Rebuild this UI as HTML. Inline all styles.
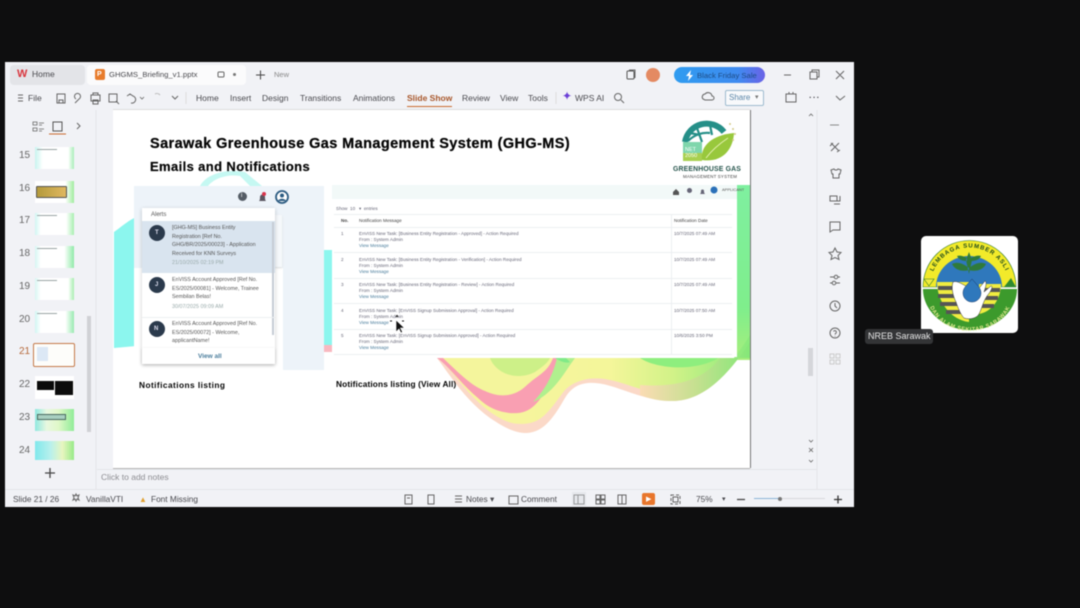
<!DOCTYPE html>
<html><head><meta charset="utf-8"><style>
html,body{margin:0;padding:0;background:#0e0e0f}
#r{position:relative;width:1080px;height:608px;overflow:hidden;background:#0e0e0f;font-family:"Liberation Sans",sans-serif;filter:blur(.45px)}
.a{position:absolute}
.t{position:absolute;white-space:nowrap;color:#4a4a4f;font-size:8.5px;line-height:11px}
.s{position:absolute;left:0;top:0}
.n{color:#666;font-size:10px;left:19px}
.th{position:absolute;left:35px;width:39px;height:22px;background:#fff}
.tl{position:absolute;left:37px;width:20px;height:1px;background:#9aa5a5}
.b{position:absolute;white-space:nowrap;font-weight:bold;color:#050505}
.m{position:absolute;white-space:nowrap;font-size:4.6px;line-height:6px;color:#667}
.l{color:#4a7d9c}
.hr{position:absolute;height:1px;background:#eceff1}
.al{position:absolute;white-space:nowrap;font-size:5.4px;line-height:8.6px;color:#555}
</style></head><body><div id="r">
<div class="a" style="left:5px;top:62px;width:849px;height:445px;background:#f1f2f6"></div>
<div class="a" style="left:10px;top:65px;width:75px;height:20px;background:#e3e4e8;border-radius:4px"></div>
<div class="a" style="left:87px;top:65px;width:159px;height:20px;background:#fbfbfc;border-radius:4px"></div>
<div class="t" style="left:17px;top:69px;color:#d9363e;font-weight:bold;font-size:11px">W</div>
<div class="t" style="left:32px;top:69px">Home</div>
<div class="a" style="left:95px;top:69px;width:10px;height:11px;background:#e87c2c;border-radius:2px"></div>
<div class="t" style="left:97px;top:69px;color:#fff;font-size:7px;font-weight:bold">P</div>
<div class="t" style="left:109px;top:69px;font-size:7.700px">GHGMS_Briefing_v1.pptx</div>
<div class="a" style="left:233px;top:73px;width:3px;height:3px;background:#777;border-radius:50%"></div>
<div class="t" style="left:274px;top:69px;font-size:7.500px;color:#888">New</div>
<svg class="s" width="1080" height="608" fill="none" stroke="#666" stroke-width="1">
<rect x="218" y="72" width="6" height="5" rx="1"/><path d="M256 75h9M260.500 70.500v9" stroke="#444"/>
<rect x="627" y="71" width="7" height="8" rx="1" stroke="#555"/><path d="M629 70h6v8"/>
<path d="M784 75h7M810 72h7v7h-7zM812 72v-2h7v7h-2M836 71l8 8M844 71l-8 8"/>
<path d="M18 95h5M18 98h5M18 101h5M57 94h8v9h-8zM59 103v-3h4v3M76 99a3 3 0 1 1 3 0l-4 4M91 95h9v6h-9zM93 95v-2h5v2M93 100h5v4h-5zM109 94h8v8h-8zM116 101l3 3M127 96l3-2 3 2a3 3 0 0 1-2 7"/>
<path d="M140 97l2 2 2-2" stroke-width=".8"/><path d="M155 94a4 4 0 0 1 5 1" stroke="#bbb"/><path d="M172 96l3 3 3-3"/>
<path d="M186 92v12M556 92v12" stroke="#ddd"/>
<circle cx="618" cy="97" r="3.500"/><path d="M621 100l3 3"/>
<path d="M703 99a3 3 0 0 1 2-5 4 4 0 0 1 7 2 2 2 0 0 1 0 4h-7z"/>
<path d="M786 94h10v8h-10zM789 92v2M793 92v2M836 96l4 4 5-4" />
<path d="M33 122h4v3h-4zM33 128h4v3h-4zM39 123h5M39 125h3M39 129h5M39 131h3" stroke-width=".8"/>
<rect x="53" y="122" width="9" height="9" stroke="#555"/><path d="M49 134h17" stroke="#c96b30"/><path d="M77 123l3 3-3 3"/>
<path d="M45 473h10M50 468v10" stroke="#444" stroke-width="1.300"/>
<path d="M96 110v380M817 110v380" stroke="#e4e5e9"/>
<path d="M97 469.500h720M5 489.500h849" stroke="#e4e5e9"/>
<path d="M830 125h9" stroke="#888"/>
<path d="M831 143l8 8M839 143l-8 8M830 146l3-3M837 152l3-2"/>
<path d="M831 170l3-1 1 1 2 0 1-1 3 1-1 4h-1v4h-6v-4h-1z"/>
<path d="M830 196h7v5h-7zM834 201h6v-5M834 204h6"/>
<path d="M830 222h10v8h-7l-3 2z"/>
<path d="M835 248l2 4 4 .5-3 3 1 4-4-2-4 2 1-4-3-3 4-.5z"/>
<path d="M830 277h4M838 277h2M830 283h2M836 283h4"/><circle cx="836" cy="277" r="1.800"/><circle cx="834" cy="283" r="1.800"/>
<circle cx="835" cy="306" r="5"/><path d="M835 303v3l2 2"/>
<circle cx="835" cy="333" r="5"/><path d="M833.500 331.500a1.500 1.500 0 1 1 2 2l-.5 1M835 336v.5"/>
<g stroke="#ccc"><rect x="830" y="354" width="4" height="4"/><rect x="836" y="354" width="4" height="4"/><rect x="830" y="360" width="4" height="4"/><rect x="836" y="360" width="4" height="4"/></g>
<path d="M809 116l2-2 2 2M809 440l2 2 2-2M809 448l2 2 2-2M809 452l2-2 2 2M809 460l2 2 2-2" stroke-width=".8"/>
<path d="M76 494l1 2 2-1-1 3 1 2-2-1-1 2-1-2-2 1 1-2-1-3 2 1z"/>
<path d="M405 495h7v9h-7zM407 498h3M428 495h6v9h-6zM455 496h7M455 499h7M455 502h7M509 496h9v8h-9z"/>
<path d="M574 495h10v9h-10zM578 495v9" stroke="#555"/><path d="M596 495h4v4h-4zM601 495h4v4h-4zM596 500h4v4h-4zM601 500h4v4h-4zM618 495h4v9h-4zM622 495h4v9h-4z"/>
<path d="M671 495h9v9h-9z" stroke-dasharray="3 2"/><rect x="673" y="497" width="5" height="5"/>
<path d="M737 499.500h8" stroke="#444" stroke-width="1.300"/><path d="M834 499.500h8M838 495.500v8" stroke="#333" stroke-width="1.300"/>
<path d="M754 498.500h25" stroke="#8cb5d8"/><path d="M782 498.500h43" stroke="#d8d8dc"/>
</svg>
<div class="a" style="left:778px;top:497px;width:4px;height:4px;border-radius:50%;background:#777"></div>
<div class="a" style="left:646px;top:68px;width:14px;height:14px;border-radius:50%;background:#e48a62"></div>
<div class="a" style="left:674px;top:67px;width:91px;height:16px;border-radius:8px;background:linear-gradient(90deg,#2f9cf0,#3f8bf0 70%,#6a62e6)"></div>
<svg class="s" width="1080" height="608"><path d="M691 70l-5 6h3l-1 5 5-6h-3z" fill="#fff"/></svg>
<div class="t" style="left:697px;top:70px;color:#1d4c86;font-size:7.700px">Black Friday Sale</div>
<div class="t" style="left:28px;top:93px">File</div>
<div class="t" style="left:196px;top:93px">Home</div>
<div class="t" style="left:230px;top:93px">Insert</div>
<div class="t" style="left:262px;top:93px">Design</div>
<div class="t" style="left:300px;top:93px">Transitions</div>
<div class="t" style="left:353px;top:93px">Animations</div>
<div class="t" style="left:407px;top:93px;color:#a8572b;font-weight:bold">Slide Show</div>
<div class="a" style="left:407px;top:106px;width:45px;height:1px;background:#c96b30"></div>
<div class="t" style="left:462px;top:93px">Review</div>
<div class="t" style="left:500px;top:93px">View</div>
<div class="t" style="left:528px;top:93px">Tools</div>
<div class="t" style="left:562px;top:91px;color:#6b3fd6;font-size:12px">✦</div>
<div class="t" style="left:575px;top:93px">WPS AI</div>
<div class="a" style="left:725px;top:90px;width:37px;height:14px;border:1px solid #9dbbcf;border-radius:2px;background:#f8f9fb"></div>
<div class="t" style="left:729px;top:92px;color:#5b86a8;font-size:8px">Share</div>
<div class="t" style="left:755px;top:92px;color:#777;font-size:7px">▾</div>
<div class="t" style="left:809px;top:92px;letter-spacing:1px;font-weight:bold">···</div>

<div class="t n" style="top:150px">15</div><div class="t n" style="top:183px">16</div><div class="t n" style="top:215px">17</div><div class="t n" style="top:248px">18</div><div class="t n" style="top:281px">19</div><div class="t n" style="top:314px">20</div><div class="t n" style="top:346px;color:#b5683a">21</div><div class="t n" style="top:379px">22</div><div class="t n" style="top:412px">23</div><div class="t n" style="top:445px">24</div>
<div class="th" style="top:147px;background:linear-gradient(90deg,#c8f4f0,#fff 20%,#fff 85%,#a8eeb8)"></div><div class="tl" style="top:149px"></div>
<div class="th" style="top:181px;background:linear-gradient(90deg,#fff,#fff 78%,#a0ec9e)"></div>
<div class="a" style="left:36px;top:186px;width:29px;height:10px;background:linear-gradient(90deg,#b49a3c,#e0b860);border:1px solid #555;border-radius:1px"></div>
<div class="th" style="top:213px;background:linear-gradient(90deg,#d0f6f2,#fff 15%,#fff 80%,#a8eeb0)"></div><div class="tl" style="top:215px"></div>
<div class="th" style="top:246px;background:linear-gradient(90deg,#d5f6f2,#fff 15%,#fff 75%,#90eaa8)"></div><div class="tl" style="top:248px"></div>
<div class="th" style="top:278px;background:linear-gradient(90deg,#d8f6f2,#fff 15%,#fff 85%,#a8eeb0)"></div><div class="tl" style="top:280px"></div>
<div class="th" style="top:311px;background:linear-gradient(90deg,#d0f6f2,#fff 15%,#fff 78%,#98eab0)"></div><div class="tl" style="top:313px"></div>
<div class="a" style="left:33px;top:343px;width:40px;height:22px;background:#fdfdfa;border:1.500px solid #c47a4a;border-radius:2px"></div>
<div class="a" style="left:37px;top:347px;width:11px;height:14px;background:#dce8f5"></div>
<div class="th" style="top:376px;height:23px"></div>
<div class="a" style="left:37px;top:381px;width:17px;height:9px;background:#0a0a0a"></div>
<div class="a" style="left:55px;top:381px;width:18px;height:14px;background:#0c0c0c"></div>
<div class="th" style="top:409px;background:linear-gradient(90deg,#90e8e0,#e8f8e0 30%,#e0f8c8 60%,#90ec98)"></div>
<div class="a" style="left:37px;top:414px;width:27px;height:4px;background:#a8cfc0;border:1px solid #4a6a60"></div>
<div class="th" style="top:441px;height:19px;background:linear-gradient(90deg,#80e8ec,#b8f0ec 40%,#e8f6c0 70%,#98ea88)"></div>
<div class="a" style="left:87px;top:316px;width:4px;height:116px;background:#d0d1d5"></div>
<div class="a" style="left:808px;top:348px;width:5px;height:28px;background:#d5d6da"></div>

<!-- slide -->
<div class="a" style="left:113px;top:110px;width:637px;height:358px;background:#fff;box-shadow:1px 0 0 #777,0 1px 0 #b5b5b5,0 -1px 0 #ddd"></div>
<svg class="s" width="1080" height="608">
<defs>
<linearGradient id="gr" x1="0" y1="0" x2="0" y2="1"><stop offset="0" stop-color="#7ff0a0"/><stop offset=".7" stop-color="#7fee8c"/><stop offset="1" stop-color="#a8ee7c"/></linearGradient>
<linearGradient id="gy" x1="0" y1="0" x2="1" y2="0"><stop offset="0" stop-color="#f8f4a0"/><stop offset=".55" stop-color="#f4f69a"/><stop offset=".75" stop-color="#d2f288"/><stop offset="1" stop-color="#88ea7c"/></linearGradient>
<linearGradient id="gt" x1="0" y1="0" x2="1" y2="0"><stop offset="0" stop-color="#fbdcb4"/><stop offset=".5" stop-color="#c6e090"/><stop offset="1" stop-color="#84e878"/></linearGradient>
</defs>
<path d="M114 232C122 226 128 221 136 217V346L114 348Z" fill="#8cf6ee"/>
<path d="M200 186C205 176 222 168 245 172L262 186Z" fill="#c5f8f2"/>
<path d="M208 186C214 178 228 174 240 176L250 186Z" fill="#fff"/>
<path d="M324 250H332V345H324Z" fill="#8cf6ee"/>
<path d="M324 345H332V352H324Z" fill="#f8b8c0"/>
<rect x="735" y="185" width="15" height="175" fill="url(#gr)"/>
<path d="M437 358C450 375 465 400 490 418C505 428 515 433 527 433C545 432 555 415 565 398C572 386 582 382 595 383C615 384 640 400 670 401C700 402 725 380 750 342V358Z" fill="#fbd9c8"/>
<path d="M440 358C455 375 475 405 500 418C510 424 520 425 530 423C545 420 553 405 565 390C575 380 590 377 605 379C625 382 645 393 670 396C700 396 725 375 750 335V358Z" fill="url(#gy)"/>
<path d="M437 358C448 365 462 385 478 398C490 410 505 414 518 413C530 412 540 403 548 385C552 375 556 368 560 358Z" fill="#f99fb2"/>
<path d="M443 358C458 372 470 385 485 391C500 398 515 397 527 385C538 375 548 372 553 358Z" fill="#f4f59c"/>
<path d="M490 358C495 372 515 382 535 372C545 365 548 362 550 358Z" fill="#cdf088"/>
<path d="M557 358C553 375 545 390 533 402C550 395 560 380 570 365L575 358Z" fill="#b0f08e"/>
<path d="M555 358C560 361 566 364 570 362L566 358Z" fill="#80ea88"/>
<path d="M640 358C655 368 690 372 715 360L718 358Z" fill="#8eee7e"/>
<path d="M640 395C650 399 660 401 670 401C700 402 725 380 750 342V358H720C705 378 680 388 640 385Z" fill="url(#gt)"/>
</svg>
<div class="b" style="left:150px;top:136px;font-size:14.500px;line-height:17px;letter-spacing:.4px;-webkit-text-stroke:.25px #000">Sarawak Greenhouse Gas Management System (GHG-MS)</div>
<div class="b" style="left:150px;top:159px;font-size:13px;line-height:16px;letter-spacing:.38px;-webkit-text-stroke:.2px #000">Emails and Notifications</div>

<!-- GHG logo -->
<svg class="s" width="1080" height="608">
<path d="M685 142a22 22 0 0 1 39-10" fill="none" stroke="#258f88" stroke-width="6"/>
<path d="M688 141c6-6 14-9 22-8M697 128l5 14M710 125l2 10M690 133l10 2" fill="none" stroke="#258f88" stroke-width="2.200"/>
<rect x="683" y="142" width="19" height="19" fill="#7fd6ac"/>
<rect x="683" y="153" width="19" height="8" fill="#a8d050"/>
<path d="M702 160c-2-14 10-25 32-27-1 17-12 30-32 27z" fill="#98c83c"/>
<path d="M706 158c6-8 13-14 22-20" stroke="#e4f0b0" stroke-width="1" fill="none"/>
<g fill="#d4c98a"><circle cx="730" cy="124" r="1"/><circle cx="733" cy="129" r="1"/><circle cx="735" cy="134" r="1"/><circle cx="733" cy="140" r="1"/></g>
</svg>
<div class="t" style="left:685px;top:147px;color:#fff;font-size:5.500px;line-height:6px">NET<br>2050</div>
<div class="t" style="left:673px;top:165px;color:#28564e;font-size:6.900px;font-weight:bold;letter-spacing:.15px;line-height:9px">GREENHOUSE GAS</div>
<div class="t" style="left:683px;top:174px;color:#444;font-size:4.400px;letter-spacing:.2px;line-height:6px">MANAGEMENT SYSTEM</div>

<!-- left panel -->
<div class="a" style="left:134px;top:186px;width:190px;height:82px;background:#edf3f9"></div>
<div class="a" style="left:283px;top:186px;width:41px;height:184px;background:#edf3f9"></div>
<div class="a" style="left:134px;top:268px;width:8px;height:102px;background:#fff"></div>
<div class="a" style="left:275px;top:215px;width:7px;height:52px;background:#f5f8fb;box-shadow:0 1px 2px #ddd"></div>
<div class="a" style="left:238px;top:192px;width:9px;height:9px;border-radius:50%;background:#555d66"></div>
<div class="t" style="left:241px;top:191px;color:#fff;font-size:6px">i</div>
<svg class="s" width="1080" height="608"><path d="M259 201c1-1 1-2 1-4a2.500 2.500 0 0 1 5 0c0 2 0 3 1 4z" fill="#5a5560"/><circle cx="264" cy="194" r="2" fill="#d8344c"/><circle cx="282" cy="197" r="6" fill="#fff" stroke="#2d5c82" stroke-width="1.800"/><circle cx="282" cy="195.500" r="2" fill="#2d5c82"/><path d="M278 201c1-3 7-3 8 0" fill="#2d5c82"/></svg>
<div class="a" style="left:142px;top:208px;width:133px;height:156px;background:#fff;box-shadow:0 1px 4px rgba(0,0,0,.2)"></div>
<div class="t" style="left:151px;top:210px;font-size:6px;color:#555">Alerts</div>
<div class="a" style="left:142px;top:221px;width:133px;height:52px;background:#d9e4ef"></div>
<div class="a" style="left:272px;top:222px;width:2px;height:113px;background:#c5ccd4"></div>
<div class="hr" style="left:142px;top:317px;width:133px"></div>
<div class="hr" style="left:142px;top:348px;width:133px"></div>
<div class="a" style="left:149px;top:225px;width:16px;height:16px;border-radius:50%;background:#2b3a4c"></div>
<div class="a" style="left:149px;top:277px;width:16px;height:16px;border-radius:50%;background:#2b3a4c"></div>
<div class="a" style="left:149px;top:321px;width:16px;height:16px;border-radius:50%;background:#2b3a4c"></div>
<div class="t" style="left:155px;top:228px;color:#dde;font-size:6px;font-weight:bold">T</div>
<div class="t" style="left:155px;top:280px;color:#dde;font-size:6px;font-weight:bold">J</div>
<div class="t" style="left:154px;top:324px;color:#dde;font-size:6px;font-weight:bold">N</div>
<div class="al" style="left:172px;top:224px">[GHG-MS] Business Entity<br>Registration [Ref No.<br>GHG/BR/2025/00023] - Application<br>Received for KNN Surveys</div>
<div class="al" style="left:172px;top:259px;color:#9aa">21/10/2025 02:19 PM</div>
<div class="al" style="left:172px;top:276px">EnVISS Account Approved [Ref No.<br>ES/2025/00081] - Welcome, Trainee<br>Sembilan Belas!</div>
<div class="al" style="left:172px;top:303px;color:#9aa">30/07/2025 09:09 AM</div>
<div class="al" style="left:172px;top:320px">EnVISS Account Approved [Ref No.<br>ES/2025/00072] - Welcome,<br>applicantName!</div>
<div class="a" style="left:142px;top:348px;width:133px;height:16px;background:#fff;box-shadow:0 1px 3px rgba(0,0,0,.15)"></div>
<div class="t" style="left:198px;top:351px;color:#4a7d9c;font-size:6.500px;font-weight:bold">View all</div>

<!-- right panel -->
<div class="a" style="left:332px;top:185px;width:405px;height:172px;background:#fff"></div>
<div class="a" style="left:332px;top:185px;width:405px;height:14px;background:#f2f9f8"></div>
<svg class="s" width="1080" height="608"><path d="M673 192l3-3 3 3v3h-6z" fill="#555"/><circle cx="689.500" cy="190.500" r="2.500" fill="#667"/><path d="M700 194c1-1 1-2 1-3a1.500 1.500 0 0 1 3 0c0 1 0 2 1 3z" fill="#667"/><circle cx="714" cy="190" r="3.500" fill="#2a70b8"/></svg>
<div class="m" style="left:722px;top:187px;color:#555;font-size:4px">APPLICANT</div>
<div class="m" style="left:336px;top:206px">Show &nbsp;10 &nbsp;&nbsp;▾ &nbsp;entries</div>
<div class="m" style="left:341px;top:218px;color:#444;font-weight:bold">No.</div>
<div class="m" style="left:359px;top:218px;color:#444">Notification Message</div>
<div class="m" style="left:674px;top:218px;color:#444">Notification Date</div>
<div class="hr" style="left:334px;top:214px;width:398px"></div><div class="hr" style="left:334px;top:227px;width:398px"></div><div class="hr" style="left:334px;top:252px;width:398px"></div><div class="hr" style="left:334px;top:278px;width:398px"></div><div class="hr" style="left:334px;top:303px;width:398px"></div><div class="hr" style="left:334px;top:329px;width:398px"></div><div class="hr" style="left:334px;top:354px;width:398px"></div>
<div class="a" style="left:671px;top:214px;width:1px;height:140px;background:#eceff1"></div>
<div class="m" style="left:341px;top:231px">1</div><div class="m" style="left:341px;top:257px">2</div><div class="m" style="left:341px;top:282px">3</div><div class="m" style="left:341px;top:308px">4</div><div class="m" style="left:341px;top:333px">5</div>
<div class="m" style="left:359px;top:231px">EnVISS New Task: [Business Entity Registration - Approved] - Action Required<br>From : System Admin<br><span class="l">View Message</span></div>
<div class="m" style="left:359px;top:257px">EnVISS New Task: [Business Entity Registration - Verification] - Action Required<br>From : System Admin<br><span class="l">View Message</span></div>
<div class="m" style="left:359px;top:282px">EnVISS New Task: [Business Entity Registration - Review] - Action Required<br>From : System Admin<br><span class="l">View Message</span></div>
<div class="m" style="left:359px;top:308px">EnVISS New Task: [EnVISS Signup Submission Approval] - Action Required<br>From : System Admin<br><span class="l">View Message</span></div>
<div class="m" style="left:359px;top:333px">EnVISS New Task: [EnVISS Signup Submission Approved] - Action Required<br>From : System Admin<br><span class="l">View Message</span></div>
<div class="m" style="left:674px;top:231px">10/7/2025 07:49 AM</div><div class="m" style="left:674px;top:257px">10/7/2025 07:49 AM</div><div class="m" style="left:674px;top:282px">10/7/2025 07:49 AM</div><div class="m" style="left:674px;top:308px">10/7/2025 07:50 AM</div><div class="m" style="left:674px;top:333px">10/6/2025 3:50 PM</div>
<div class="b" style="left:139px;top:380px;font-size:8.300px;line-height:11px;letter-spacing:.45px">Notifications listing</div>
<div class="b" style="left:336px;top:379px;font-size:8.300px;line-height:11px;letter-spacing:.13px">Notifications listing (View All)</div>
<svg class="s" width="1080" height="608"><path d="M396 320v12l3-3 2 4 1.500-1-2-4h4z" fill="#111" stroke="#fff" stroke-width=".6"/><path d="M396 317l1-1.500 1 1.500M392 321h-2M402 321h2" stroke="#111" stroke-width="1" fill="none"/></svg>

<div class="t" style="left:101px;top:472px;color:#8d8d92;font-size:8.500px">Click to add notes</div>
<div class="t" style="left:13px;top:494px;font-size:8.300px">Slide 21 / 26</div>
<div class="t" style="left:86px;top:494px;font-size:8.300px">VanillaVTI</div>
<div class="t" style="left:139px;top:494px;color:#e0a030;font-size:8px">▲</div>
<div class="t" style="left:151px;top:494px;font-size:8.300px">Font Missing</div>
<div class="t" style="left:466px;top:494px;font-size:8.300px">Notes ▾</div>
<div class="t" style="left:521px;top:494px;font-size:8.300px">Comment</div>
<div class="a" style="left:572px;top:492px;width:14px;height:14px;background:#dcdde1;opacity:.5"></div>
<div class="a" style="left:642px;top:493px;width:13px;height:12px;background:#e8762c;border-radius:2px"></div>
<div class="t" style="left:646px;top:494px;color:#fff;font-size:7px">▶</div>
<div class="t" style="left:696px;top:494px;font-size:8.300px">75%</div>
<div class="t" style="left:722px;top:494px;font-size:7px">▾</div>

<!-- NREB logo -->
<div class="a" style="left:921px;top:236px;width:97px;height:97px;background:#fff;border-radius:5px"></div>
<svg class="s" width="1080" height="608">
<path d="M923 287a46.500 46.500 0 0 1 93 0z" fill="#f2ea2a" stroke="#2f7a2a" stroke-width=".6"/>
<path d="M936 287a33 31 0 0 1 66 0z" fill="#2f78bc"/>
<path d="M923 289h94c0 22-21 41-47 41s-47-19-47-41z" fill="#3c9a2c"/>
<path d="M937 282h32v40c-18-2-32-20-32-40z" fill="#f0ec40"/>
<g fill="#555"><rect x="938" y="286" width="22" height="4"/><rect x="938" y="294" width="24" height="4"/><rect x="940" y="302" width="24" height="4"/><rect x="946" y="310" width="22" height="4"/></g>
<path d="M1001 284h-22v30c12-2 22-14 22-30z" fill="#f0ec40"/>
<g fill="#555"><rect x="982" y="288" width="18" height="4"/><rect x="982" y="296" width="16" height="4"/><rect x="982" y="304" width="12" height="4"/></g>
<path d="M924 279l10 0-5 7z" fill="#f0ec40" stroke="#2f7a2a" stroke-width=".6"/>
<path d="M1004 287l7-9 5 9z" fill="#2f8a30"/>
<path d="M953 282c-2 6 0 14 3 20 2 6 5 13 8 16 6 2 13 0 15-4 3-6 4-12 8-18 5-6 6-10 4-10l-7 6c2-6 3-10 1-11l-9 11c-2-3-5-5-8-5-5-2-11-7-15-5z" fill="#fff" stroke="#333" stroke-width=".5"/>
<path d="M972 279c-6 7-9 9-9 14a9 9 0 0 0 18 0c0-5-4-8-9-14z" fill="#2f78bc" stroke="#1a3a6a" stroke-width=".5"/>
<path d="M969 252l3 8-3 14-3-14zM969 268c-8-6-13-6-17-4 3 6 10 8 17 6zM969 268c8-6 13-6 17-4-3 6-10 8-17 6zM967 258c-4-2-7-3-10-2 2 4 6 5 10 5zM971 258c4-2 7-3 10-2-2 4-6 5-10 5z" fill="#2f7a3a"/>
<defs><path id="ta" d="M930 287a39.500 39.500 0 0 1 79 0"/><path id="tb" d="M928 296a42 35 0 0 0 84 0"/></defs>
<text font-family="Liberation Sans" font-weight="bold" font-size="6" fill="#1d4a1d" letter-spacing="1" text-anchor="middle"><textPath href="#ta" startOffset="50%">LEMBAGA SUMBER ASLI</textPath></text>
<text font-family="Liberation Sans" font-weight="bold" font-size="5.500" fill="#e2ea90" letter-spacing=".6" text-anchor="middle"><textPath href="#tb" startOffset="50%">DAN ALAM SEKITAR SARAWAK</textPath></text>
</svg>
<div class="a" style="left:865px;top:329px;width:68px;height:15px;background:#333436;border-radius:3px"></div>
<div class="t" style="left:868px;top:331px;color:#e6e6e6;font-size:9px">NREB Sarawak</div>
</div></body></html>
